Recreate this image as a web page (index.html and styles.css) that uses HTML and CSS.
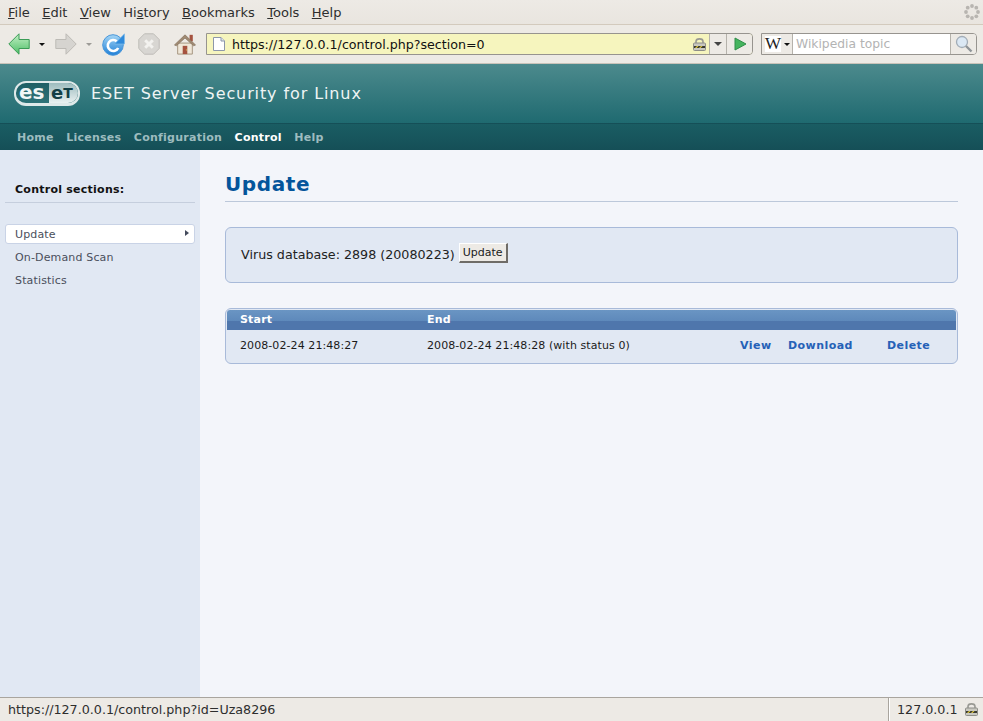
FILE: index.html
```html
<!DOCTYPE html>
<html lang="en">
<head>
    <meta charset="UTF-8">
    <meta name="viewport" content="width=device-width, initial-scale=1.0">
    <title>ESET Server Security for Linux</title>
    <link rel="stylesheet" href="styles.css">
</head>
<body>
    <div class="menubar">
        <div class="menu-items">
            <span><u>F</u>ile</span>
            <span><u>E</u>dit</span>
            <span><u>V</u>iew</span>
            <span>Hi<u>s</u>tory</span>
            <span><u>B</u>ookmarks</span>
            <span><u>T</u>ools</span>
            <span><u>H</u>elp</span>
        </div>
        <svg class="throbber" width="16" height="16" viewBox="0 0 16 16">
            <g fill="#b8b5b0">
                <circle cx="8" cy="2" r="1.9"/><circle cx="12.3" cy="3.7" r="1.9"/>
                <circle cx="14" cy="8" r="1.9"/><circle cx="12.3" cy="12.3" r="1.9"/>
                <circle cx="8" cy="14" r="1.9"/><circle cx="3.7" cy="12.3" r="1.9"/>
                <circle cx="2" cy="8" r="1.9"/><circle cx="3.7" cy="3.7" r="1.9"/>
            </g>
        </svg>
    </div>

    <div class="toolbar">
        <svg class="tb-back" width="22" height="22" viewBox="0 0 22 22">
            <defs>
                <linearGradient id="backfill" x1="0" y1="0" x2="0" y2="1">
                    <stop offset="0" stop-color="#c4f0c6"/>
                    <stop offset="1" stop-color="#4fbf68"/>
                </linearGradient>
            </defs>
            <path d="M0.8 11 L11 0.8 V6.5 H21.2 V15.5 H11 V21.2 Z" fill="url(#backfill)" stroke="#3b9c56"/>
        </svg>
        <span class="drop-arrow"></span>
        <svg class="tb-forward" width="22" height="22" viewBox="0 0 22 22">
            <path d="M21.2 11 L11 0.8 V6.5 H0.8 V15.5 H11 V21.2 Z" fill="#d6d4d0" stroke="#bdbbb6"/>
        </svg>
        <span class="drop-arrow off"></span>
        <svg class="tb-reload" width="23" height="23" viewBox="0 0 23 23">
            <defs>
                <linearGradient id="reloadfill" x1="0" y1="0" x2="0" y2="1">
                    <stop offset="0" stop-color="#a5d6f5"/>
                    <stop offset="1" stop-color="#1f7fd6"/>
                </linearGradient>
            </defs>
            <circle cx="11" cy="12" r="10.3" fill="url(#reloadfill)" stroke="#4a97da"/>
            <path d="M15 8.5 A5.5 5.5 0 1 0 16.2 15" fill="none" stroke="#fff" stroke-width="2.6"/>
            <path d="M12.5 11 H22.5 V0.8 Z" fill="#2f8adb" stroke="#7fbcea" stroke-width="0.7"/>
        </svg>
        <svg class="tb-stop" width="22" height="22" viewBox="0 0 22 22">
            <path d="M6.5 0.8 H15.5 L21.2 6.5 V15.5 L15.5 21.2 H6.5 L0.8 15.5 V6.5 Z" fill="#d8d6d2" stroke="#bebcb7"/>
            <path d="M7.2 7.2 L14.8 14.8 M14.8 7.2 L7.2 14.8" stroke="#f3f2ef" stroke-width="3"/>
        </svg>
        <svg class="tb-home" width="22" height="22" viewBox="0 0 24 24">
            <rect x="17" y="2" width="3.5" height="7" fill="#a5523f"/>
            <path d="M4 11 H20 V23 H4 Z" fill="#efe7d8" stroke="#a08f7a"/>
            <path d="M0.5 13 L12 2 L23.5 13 L21.5 14 L12 5.5 L2.5 14 Z" fill="#a08a72" stroke="#7f6c58" stroke-width="0.7"/>
            <rect x="9.5" y="14" width="5" height="9" fill="#a5523f"/>
            <rect x="13" y="18" width="1" height="1" fill="#f1d54a"/>
        </svg>

        <div class="urlbar">
            <svg class="page-icon" width="12" height="14" viewBox="0 0 12 14">
                <path d="M0.5 0.5 H8 L11.5 4 V13.5 H0.5 Z" fill="#fff" stroke="#8d97aa"/>
                <path d="M8 0.5 V4 H11.5" fill="#dfe4ec" stroke="#8d97aa"/>
            </svg>
            <span class="url-text">https://127.0.0.1/control.php?section=0</span>
            <svg class="lock" width="13" height="14" viewBox="0 0 13 14">
                <path d="M3 7 V4.5 C3 1 10 1 10 4.5 V7" fill="none" stroke="#9a9a94" stroke-width="1.6"/>
                <rect x="0.5" y="6" width="12" height="7.5" rx="1" fill="#c9c8c0" stroke="#8e8e88"/>
                <path d="M1 9 H12 V11 H1 Z" fill="#3a3a30"/>
                <path d="M2 11 L4 9 H5.5 L3.5 11 Z M6 11 L8 9 H9.5 L7.5 11 Z" fill="#e9cf3a"/>
            </svg>
            <span class="url-drop"><span class="drop-arrow dark"></span></span>
            <span class="url-go">
                <svg width="14" height="14" viewBox="0 0 14 14"><path d="M2 1 L13 7 L2 13 Z" fill="#45b45e" stroke="#2f8e48"/></svg>
            </span>
        </div>

        <div class="searchbar">
            <span class="engine"><span class="engine-w">W</span><span class="drop-arrow dark small"></span></span>
            <span class="search-text">Wikipedia topic</span>
            <span class="search-go">
                <svg width="18" height="18" viewBox="0 0 18 18">
                    <circle cx="7" cy="7" r="5.5" fill="#dbe8f4" stroke="#a3adb7" stroke-width="1.3"/>
                    <path d="M11 11 L16.5 16.5" stroke="#8f9498" stroke-width="2.4"/>
                </svg>
            </span>
        </div>
    </div>

    <div class="app-header">
        <div class="brand">
            <div class="logo"><span class="logo-dark">es</span><span class="logo-light"><span class="logo-e">e</span><span class="logo-t">T</span></span></div>
            <h2>ESET Server Security for Linux</h2>
        </div>
        <nav class="main-nav">
            <a href="#">Home</a>
            <a href="#">Licenses</a>
            <a href="#">Configuration</a>
            <a href="#" class="current">Control</a>
            <a href="#">Help</a>
        </nav>
    </div>

    <div class="main">
        <div class="sidebar">
            <h4>Control sections:</h4>
            <ul>
                <li class="active">Update</li>
                <li>On-Demand Scan</li>
                <li>Statistics</li>
            </ul>
        </div>
        <div class="content">
            <h1>Update</h1>
            <div class="box db-box">
                <span>Virus database: 2898 (20080223)</span>
                <button>Update</button>
            </div>
            <div class="box log-box">
                <div class="log-head">
                    <span class="col-start">Start</span>
                    <span>End</span>
                </div>
                <div class="log-row">
                    <span class="col-start">2008-02-24 21:48:27</span>
                    <span class="col-end">2008-02-24 21:48:28 (with status 0)</span>
                    <a href="#" class="act-view">View</a>
                    <a href="#" class="act-download">Download</a>
                    <a href="#" class="act-delete">Delete</a>
                </div>
            </div>
        </div>
    </div>

    <div class="statusbar">
        <span class="status-url">https://127.0.0.1/control.php?id=Uza8296</span>
        <span class="status-host">
            127.0.0.1
            <svg class="lock" width="13" height="14" viewBox="0 0 13 14">
                <path d="M3 7 V4.5 C3 1 10 1 10 4.5 V7" fill="none" stroke="#9a9a94" stroke-width="1.6"/>
                <rect x="0.5" y="6" width="12" height="7.5" rx="1" fill="#c9c8c0" stroke="#8e8e88"/>
                <path d="M1 9 H12 V11 H1 Z" fill="#3a3a30"/>
                <path d="M2 11 L4 9 H5.5 L3.5 11 Z M6 11 L8 9 H9.5 L7.5 11 Z" fill="#e9cf3a"/>
            </svg>
        </span>
    </div>
</body>
</html>
```

FILE: styles.css
```css
html, body {
    height: 100%;
}

body {
    margin: 0;
    padding: 0;
    display: flex;
    flex-direction: column;
    overflow: hidden;
    font-family: "DejaVu Sans", sans-serif;
    font-size: 11px;
    color: #1a1a1a;
    background-color: #f3f5fa;
}

/* browser chrome */
.menubar {
    height: 25px;
    box-sizing: border-box;
    display: flex;
    align-items: center;
    justify-content: space-between;
    padding: 0 3px 0 8px;
    background: linear-gradient(#edeae5, #e9e5df);
    border-bottom: 1px solid #d3cabd;
    font-size: 13px;
    color: #2e2e2e;
}

.menu-items {
    display: flex;
    gap: 12.5px;
}

.toolbar {
    height: 39px;
    box-sizing: border-box;
    display: flex;
    align-items: center;
    padding: 0 6px 0 8px;
    background-color: #edeae5;
    border-bottom: 1px solid #c9c3b9;
}

.drop-arrow {
    display: inline-block;
    width: 0;
    height: 0;
    border-left: 3px solid transparent;
    border-right: 3px solid transparent;
    border-top: 3px solid #111;
}

.drop-arrow.off {
    border-top-color: #9d9b97;
}

.drop-arrow.dark {
    border-left-width: 4px;
    border-right-width: 4px;
    border-top-width: 4px;
    border-top-color: #444;
}

.drop-arrow.small {
    border-left-width: 3px;
    border-right-width: 3px;
    border-top-width: 3px;
    border-top-color: #111;
}

.tb-back { margin-right: 9px; }
.tb-forward { margin-left: 10px; }
.toolbar > .drop-arrow.off { margin: 0 10px 0 9px; }
.tb-reload { margin-right: 13px; }
.tb-stop { margin-right: 14px; }
.tb-home { margin-right: 10px; }

.urlbar {
    width: 547px;
    height: 22px;
    box-sizing: border-box;
    display: flex;
    align-items: center;
    border: 1px solid #97948f;
    border-radius: 0 4px 4px 0;
    background-color: #f6f5be;
    margin-right: 8px;
}

.page-icon {
    margin: 0 7px 0 6px;
}

.url-text {
    flex: 1;
    font-size: 12.65px;
    color: #111;
    white-space: nowrap;
}

.urlbar .lock {
    margin-right: 3px;
}

.url-drop,
.url-go {
    height: 100%;
    display: flex;
    align-items: center;
    justify-content: center;
    background-color: #edeae5;
    border-left: 1px solid #b5b2ab;
}

.url-drop {
    width: 16px;
}

.url-go {
    width: 25px;
    border-radius: 0 3px 3px 0;
}

.searchbar {
    flex: 1;
    height: 22px;
    box-sizing: border-box;
    display: flex;
    align-items: center;
    border: 1px solid #97948f;
    border-radius: 0 4px 4px 0;
    background-color: #fff;
}

.engine {
    width: 31px;
    height: 100%;
    box-sizing: border-box;
    display: flex;
    align-items: center;
    gap: 3px;
    padding-left: 3px;
    background-color: #edeae5;
    border-right: 1px solid #b5b2ab;
}

.engine-w {
    width: 16px;
    text-align: center;
    background-color: #fff;
    font-family: "Liberation Serif", serif;
    font-size: 17px;
    line-height: 16px;
    color: #222;
}

.search-text {
    flex: 1;
    padding-left: 3px;
    font-size: 12.3px;
    color: #b3b3b3;
}

.search-go {
    width: 25px;
    height: 100%;
    display: flex;
    align-items: center;
    justify-content: center;
    background-color: #edeae5;
    border-left: 1px solid #b5b2ab;
    border-radius: 0 3px 3px 0;
}

/* app header */
.app-header {
    background: linear-gradient(#4c8a8d 0, #1f6a70 59px, #1a5d63 60px, #154f57 86px);
}

.brand {
    height: 59px;
    display: flex;
    align-items: center;
    padding-left: 14px;
    box-sizing: border-box;
}

.brand h2 {
    margin: 0 0 0 11px;
    font-size: 16px;
    font-weight: normal;
    letter-spacing: 0.9px;
    color: #eef4f4;
}

.logo {
    width: 66px;
    height: 25px;
    box-sizing: border-box;
    display: flex;
    align-items: stretch;
    border: 2px solid #dfe9e9;
    border-bottom-width: 3px;
    border-radius: 12px;
    background: linear-gradient(#1f5f65, #2e7378);
    font-family: "DejaVu Sans", sans-serif;
    font-weight: bold;
}

.logo-dark {
    width: 33px;
    padding-left: 3px;
    box-sizing: border-box;
    font-size: 20px;
    line-height: 18px;
    color: #f2f6f6;
}

.logo-light {
    flex: 1;
    display: flex;
    align-items: center;
    padding-left: 2px;
    border-radius: 0 10px 10px 0;
    background: linear-gradient(#9dbcbe, #eaf1f1);
    color: #123f46;
}

.logo-e {
    font-size: 18px;
    line-height: 18px;
}

.logo-t {
    font-size: 14px;
    line-height: 18px;
}

.main-nav {
    height: 27px;
    box-sizing: border-box;
    display: flex;
    align-items: center;
    gap: 12.5px;
    padding-left: 17px;
    border-top: 1px solid #154f57;
}

.main-nav a {
    font-size: 11px;
    font-weight: bold;
    letter-spacing: 0.25px;
    text-decoration: none;
    color: #9dbcbf;
}

.main-nav a.current {
    color: #fff;
}

/* page */
.main {
    flex: 1;
    display: flex;
    min-height: 0;
}

.sidebar {
    width: 200px;
    box-sizing: border-box;
    padding: 33px 5px 0 5px;
    background-color: #e1e8f3;
}

.sidebar h4 {
    margin: 0 0 21px 0;
    padding: 0 10px 6px 10px;
    font-size: 11px;
    letter-spacing: 0.25px;
    color: #111;
    border-bottom: 1px solid #c5cedd;
}

.sidebar ul {
    list-style: none;
    margin: 0;
    padding: 0;
}

.sidebar li {
    height: 20px;
    box-sizing: border-box;
    line-height: 19px;
    margin-bottom: 3px;
    padding-left: 9px;
    letter-spacing: 0.15px;
    color: #4a4f5c;
    border: 1px solid transparent;
    border-radius: 3px;
    position: relative;
}

.sidebar li.active {
    background-color: #fff;
    border-color: #c9d3e6;
}

.sidebar li.active::after {
    content: "";
    position: absolute;
    right: 5px;
    top: 5px;
    border-top: 3.5px solid transparent;
    border-bottom: 3.5px solid transparent;
    border-left: 4px solid #444a5c;
}

.content {
    flex: 1;
    padding: 22px 25px 0 25px;
}

.content h1 {
    margin: 0 0 25px 0;
    padding-bottom: 5px;
    font-size: 20px;
    letter-spacing: 0.6px;
    color: #04559b;
    border-bottom: 1px solid #bcc8da;
}

.box {
    box-sizing: border-box;
    background-color: #e1e8f3;
    border: 1px solid #a8bad9;
    border-radius: 6px;
}

.db-box {
    height: 56px;
    margin-bottom: 25px;
    display: flex;
    align-items: center;
    padding: 0 14px 1px 15px;
    font-size: 12.7px;
    color: #222;
}

.db-box button {
    margin: 0 0 4px 4px;
    height: 20px;
    padding: 0 3px;
    font-family: "DejaVu Sans", sans-serif;
    font-size: 11px;
    color: #1a1a1a;
    background-color: #edeae5;
    border-style: solid;
    border-width: 1px 2px 2px 1px;
    border-color: #fff #6f6c67 #6f6c67 #fff;
}

.log-box {
    height: 56px;
    padding: 1px 1px 0 1px;
}

.log-head {
    height: 20px;
    box-sizing: border-box;
    padding-bottom: 2px;
    display: flex;
    align-items: center;
    background: linear-gradient(#6a95c3 0, #5e89bb 11px, #4f76ac 11px, #4f76ac 100%);
    border-radius: 3px 3px 0 0;
    color: #fff;
    font-weight: bold;
    letter-spacing: 0.2px;
}

.col-start {
    width: 187px;
    padding-left: 13px;
    box-sizing: content-box;
}

.log-row {
    height: 29px;
    box-sizing: border-box;
    padding-top: 2px;
    display: flex;
    align-items: center;
    color: #1a1a1a;
    letter-spacing: 0.08px;
    white-space: nowrap;
}

.col-end {
    width: 313px;
}

.log-row a {
    font-weight: bold;
    letter-spacing: 0.45px;
    text-decoration: none;
    color: #2561b7;
}

.act-view { width: 48px; }
.act-download { width: 99px; }

/* status bar */
.statusbar {
    height: 24px;
    box-sizing: border-box;
    display: flex;
    align-items: center;
    justify-content: space-between;
    background-color: #edeae5;
    border-top: 1px solid #a9a59e;
    font-size: 12.7px;
    color: #2e2e2e;
}

.status-url {
    padding: 0 0 1px 8px;
}

.status-host {
    width: 95px;
    height: 100%;
    box-sizing: border-box;
    display: flex;
    align-items: center;
    justify-content: space-between;
    padding: 0 5px 1px 8px;
    border-left: 1px solid #a9a59e;
    box-shadow: inset 1px 0 0 #fff;
}
```
